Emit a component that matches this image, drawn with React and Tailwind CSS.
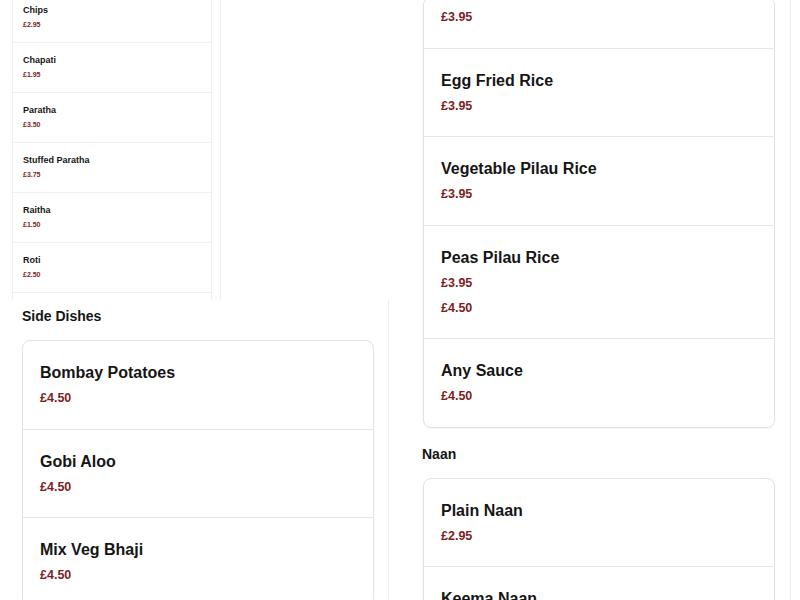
import React from "react";

const font = { fontFamily: '"Liberation Sans", Arial, sans-serif' };

function BigRow({ name, price, last }) {
  return (
    <div className={`pl-[17px] pr-4 pt-5 pb-[20.5px] ${last ? "" : "border-b border-[#e6e6e6]"}`}>
      <div className="text-[16px] leading-6 font-bold text-[#151515]">{name}</div>
      <div className="mt-1 text-[12.5px] leading-[19px] font-bold text-[#7d1d24]">{price}</div>
    </div>
  );
}

function PriceOnlyRow({ price, className = "" }) {
  return (
    <div className={`pl-[17px] pr-4 border-b border-[#e6e6e6] ${className}`}>
      <div className="text-[12.5px] leading-[19px] font-bold text-[#7d1d24]">{price}</div>
    </div>
  );
}

function SmallRow({ name, price }) {
  return (
    <div className="pl-[10px] pr-2 pt-[11px] pb-[12px] border-b border-[#f0f0f0]">
      <div className="text-[9px] leading-[13px] font-bold text-[#151515]">{name}</div>
      <div className="mt-[3px] text-[7px] leading-[10px] font-bold text-[#7d1d24]">{price}</div>
    </div>
  );
}

function BigCard({ items, lead, className = "" }) {
  return (
    <div className={`w-[352px] rounded-lg border border-[#e3e3e3] bg-white shadow-[0_1px_2px_rgba(0,0,0,0.04)] ${className}`}>
      {lead}
      {items.map((it, i) => (
        <BigRow key={i} name={it[0]} price={it[1]} last={i === items.length - 1} />
      ))}
    </div>
  );
}

function Heading({ children, className = "" }) {
  return <div className={`text-[14px] leading-5 font-bold text-[#151515] ${className}`}>{children}</div>;
}

export default function App() {
  const small = [
    ["Chips", "£2.95"],
    ["Chapati", "£1.95"],
    ["Paratha", "£3.50"],
    ["Stuffed Paratha", "£3.75"],
    ["Raitha", "£1.50"],
    ["Roti", "£2.50"],
  ];
  const rice = [
    ["Egg Fried Rice", "£3.95"],
    ["Vegetable Pilau Rice", "£3.95"],
    ["Peas Pilau Rice", "£3.95"],
  ];
  const sides = [
    ["Bombay Potatoes", "£4.50"],
    ["Gobi Aloo", "£4.50"],
    ["Mix Veg Bhaji", "£4.50"],
  ];
  const sauces = [["Any Sauce", "£4.50"]];
  const naan = [
    ["Plain Naan", "£2.95"],
    ["Keema Naan", "£3.50"],
  ];

  return (
    <div style={font} className="w-[800px] h-[600px] overflow-hidden bg-white">
      {/* top band */}
      <div className="flex h-[300px] overflow-hidden">
        <div className="w-[221px] shrink-0 border-r border-[#efefef] pl-3">
          <div className="-mt-[8px] w-[200px] border-x border-t border-[#eeeeee] bg-white">
            {small.map((it, i) => (
              <SmallRow key={i} name={it[0]} price={it[1]} />
            ))}
            <div className="h-[20px]" />
          </div>
        </div>
        <div className="ml-[184px] w-[386px] shrink-0 border-r border-[#ececec] pl-[18px]">
          <BigCard
            items={rice}
            className="-mt-[3px]"
            lead={<PriceOnlyRow price="£3.95" className="pt-[9.5px] pb-[21px]" />}
          />
        </div>
      </div>

      {/* bottom band */}
      <div className="flex h-[300px] overflow-hidden">
        <div className="w-[389px] shrink-0 border-r border-[#ececec] pl-[22px] pt-[6px]">
          <Heading className="mb-[14px]">Side Dishes</Heading>
          <BigCard items={sides} />
        </div>
        <div className="ml-4 w-[386px] shrink-0 border-r border-[#ececec] pl-[17px]">
          <div className="pl-[1px]">
            <BigCard
              items={sauces}
              className="-mt-[10px]"
              lead={<PriceOnlyRow price="£4.50" className="pt-[7.5px] pb-[20.5px]" />}
            />
          </div>
          <Heading className="mt-4 mb-[14px]">Naan</Heading>
          <div className="pl-[1px]">
            <BigCard items={naan} />
          </div>
        </div>
      </div>
    </div>
  );
}
